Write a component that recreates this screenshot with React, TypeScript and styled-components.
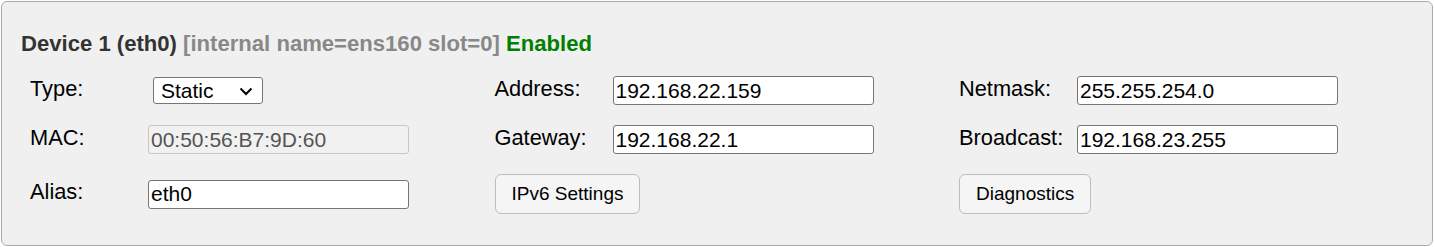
import styled, { createGlobalStyle } from "styled-components";

const GlobalStyle = createGlobalStyle`
  html, body {
    margin: 0;
    padding: 0;
    background: #ffffff;
    font-family: "Liberation Sans", Arial, sans-serif;
  }
`;

const Panel = styled.section`
  margin: 1px;
  height: 245px;
  box-sizing: border-box;
  border: 1px solid #ababab;
  border-radius: 6px;
  background: #f0f0f0;
  padding: 29px 19px 0 19px;
`;

const Title = styled.div`
  font-size: 22.1px;
  font-weight: bold;
  line-height: 25px;
  color: #333333;
  white-space: nowrap;
`;

const Part = styled.span<{ tone: string }>`
  color: ${(p) => p.tone};
`;

const Grid = styled.div`
  margin: 20px 0 0 9px;
  display: grid;
  grid-template-columns: repeat(3, 464.5px);
  grid-template-rows: 29px 29px 40px;
  row-gap: 20px;
`;

const Field = styled.div`
  display: flex;
  align-items: center;
`;

const Label = styled.label`
  width: 118px;
  flex: none;
  font-size: 21.8px;
  line-height: 25px;
  color: #000;
  margin-bottom: 5px;
  white-space: nowrap;
`;

const TextInput = styled.input`
  box-sizing: border-box;
  width: 261px;
  height: 29px;
  margin: 0;
  padding: 1px 2px;
  border: 1px solid #767676;
  border-radius: 3px;
  background: #ffffff;
  font-family: "Liberation Sans", Arial, sans-serif;
  font-size: 21px;
  color: #000;
  outline: none;

  &:disabled {
    border-color: #c6c6c6;
    background: #f1f1f1;
    color: #545454;
  }
`;

const SelectWrap = styled.div`
  position: relative;
  margin-left: 5px;
  width: 110px;
  height: 27px;
`;

const Select = styled.select`
  appearance: none;
  box-sizing: border-box;
  width: 100%;
  height: 100%;
  margin: 0;
  padding: 0 0 0 7px;
  border: 1px solid #767676;
  border-radius: 3px;
  background: #ffffff;
  font-family: "Liberation Sans", Arial, sans-serif;
  font-size: 21px;
  color: #000;
  outline: none;
`;

const Chevron = styled.svg`
  position: absolute;
  right: 10px;
  top: 10px;
  pointer-events: none;
`;

const Button = styled.button`
  box-sizing: border-box;
  height: 40px;
  padding: 0 16px;
  border: 1px solid #bdbdbd;
  border-radius: 6px;
  background: #f5f5f5;
  font-family: "Liberation Sans", Arial, sans-serif;
  font-size: 19px;
  color: #000;
  cursor: pointer;
`;

export default function App() {
  return (
    <>
      <GlobalStyle />
      <Panel>
        <Title>
          Device 1 (eth0) <Part tone="#888888">[internal name=ens160 slot=0]</Part>{" "}
          <Part tone="#008000">Enabled</Part>
        </Title>
        <Grid>
          <Field>
            <Label>Type:</Label>
            <SelectWrap>
              <Select defaultValue="static">
                <option value="static">Static</option>
                <option value="dhcp">DHCP</option>
              </Select>
              <Chevron width="14" height="9" viewBox="0 0 14 9">
                <polyline points="1.5,1.5 7,7 12.5,1.5" fill="none" stroke="#000" strokeWidth="2" />
              </Chevron>
            </SelectWrap>
          </Field>
          <Field>
            <Label>Address:</Label>
            <TextInput defaultValue="192.168.22.159" />
          </Field>
          <Field>
            <Label>Netmask:</Label>
            <TextInput defaultValue="255.255.254.0" />
          </Field>

          <Field>
            <Label>MAC:</Label>
            <TextInput defaultValue="00:50:56:B7:9D:60" disabled />
          </Field>
          <Field>
            <Label>Gateway:</Label>
            <TextInput defaultValue="192.168.22.1" />
          </Field>
          <Field>
            <Label>Broadcast:</Label>
            <TextInput defaultValue="192.168.23.255" />
          </Field>

          <Field>
            <Label>Alias:</Label>
            <TextInput defaultValue="eth0" />
          </Field>
          <Field>
            <Button>IPv6 Settings</Button>
          </Field>
          <Field>
            <Button>Diagnostics</Button>
          </Field>
        </Grid>
      </Panel>
    </>
  );
}
